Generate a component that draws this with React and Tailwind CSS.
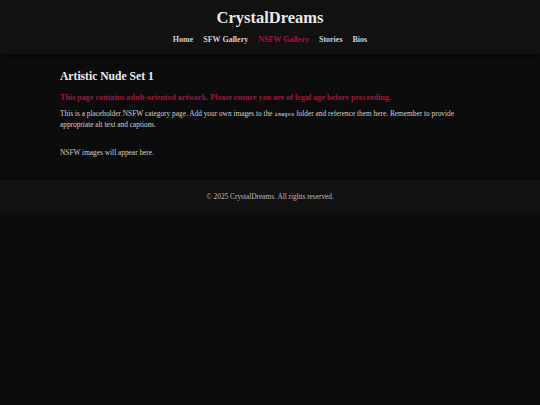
export default function App() {
  const links = ['Home', 'SFW Gallery', 'NSFW Gallery', 'Stories', 'Bios'];
  return (
    <div className="min-h-screen bg-[#0c0c0d] text-[#d8d8d8]" style={{ fontFamily: 'Georgia, "Liberation Serif", serif' }}>
      {/* Header */}
      <header className="bg-[#111112] shadow-[0_2px_6px_rgba(0,0,0,0.6)] pt-[8px] pb-[8px] text-center">
        <h1 className="text-[16.5px] font-bold text-[#e8e8e8] leading-[20px]">CrystalDreams</h1>
        <nav className="mt-[6px] flex justify-center gap-[10px] text-[8px] font-bold leading-[12px]">
          {links.map(l => (
            <a key={l} href="#" className={l === 'NSFW Gallery' ? 'text-[#a0153e]' : 'text-[#cfcfcf]'}>{l}</a>
          ))}
        </nav>
      </header>

      {/* Content */}
      <main className="max-w-[420px] mx-auto pt-[15px] pb-[22px]">
        <h2 className="text-[11.6px] font-bold text-[#ececec] leading-[16px]">Artistic Nude Set 1</h2>
        <p className="mt-[7px] text-[8.1px] font-bold text-[#a0153e] leading-[12px]">
          This page contains adult-oriented artwork. Please ensure you are of legal age before proceeding.
        </p>
        <p className="mt-[4px] text-[7.35px] leading-[11px] text-[#d0d0d0]">
          This is a placeholder NSFW category page. Add your own images to the <code className="text-[5.5px] leading-none" style={{ fontFamily: '"DejaVu Sans Mono", monospace' }}>images</code> folder and reference them here. Remember to provide appropriate alt text and captions.
        </p>
        <p className="mt-[17px] text-[7.35px] leading-[11px] text-[#d0d0d0]">NSFW images will appear here.</p>
      </main>

      {/* Footer */}
      <footer className="bg-[#111112] shadow-[0_-2px_6px_rgba(0,0,0,0.5)] py-[11px] text-center text-[7.35px] leading-[11px] text-[#bdbdbd]">
        © 2025 CrystalDreams. All rights reserved.
      </footer>
    </div>
  );
}
